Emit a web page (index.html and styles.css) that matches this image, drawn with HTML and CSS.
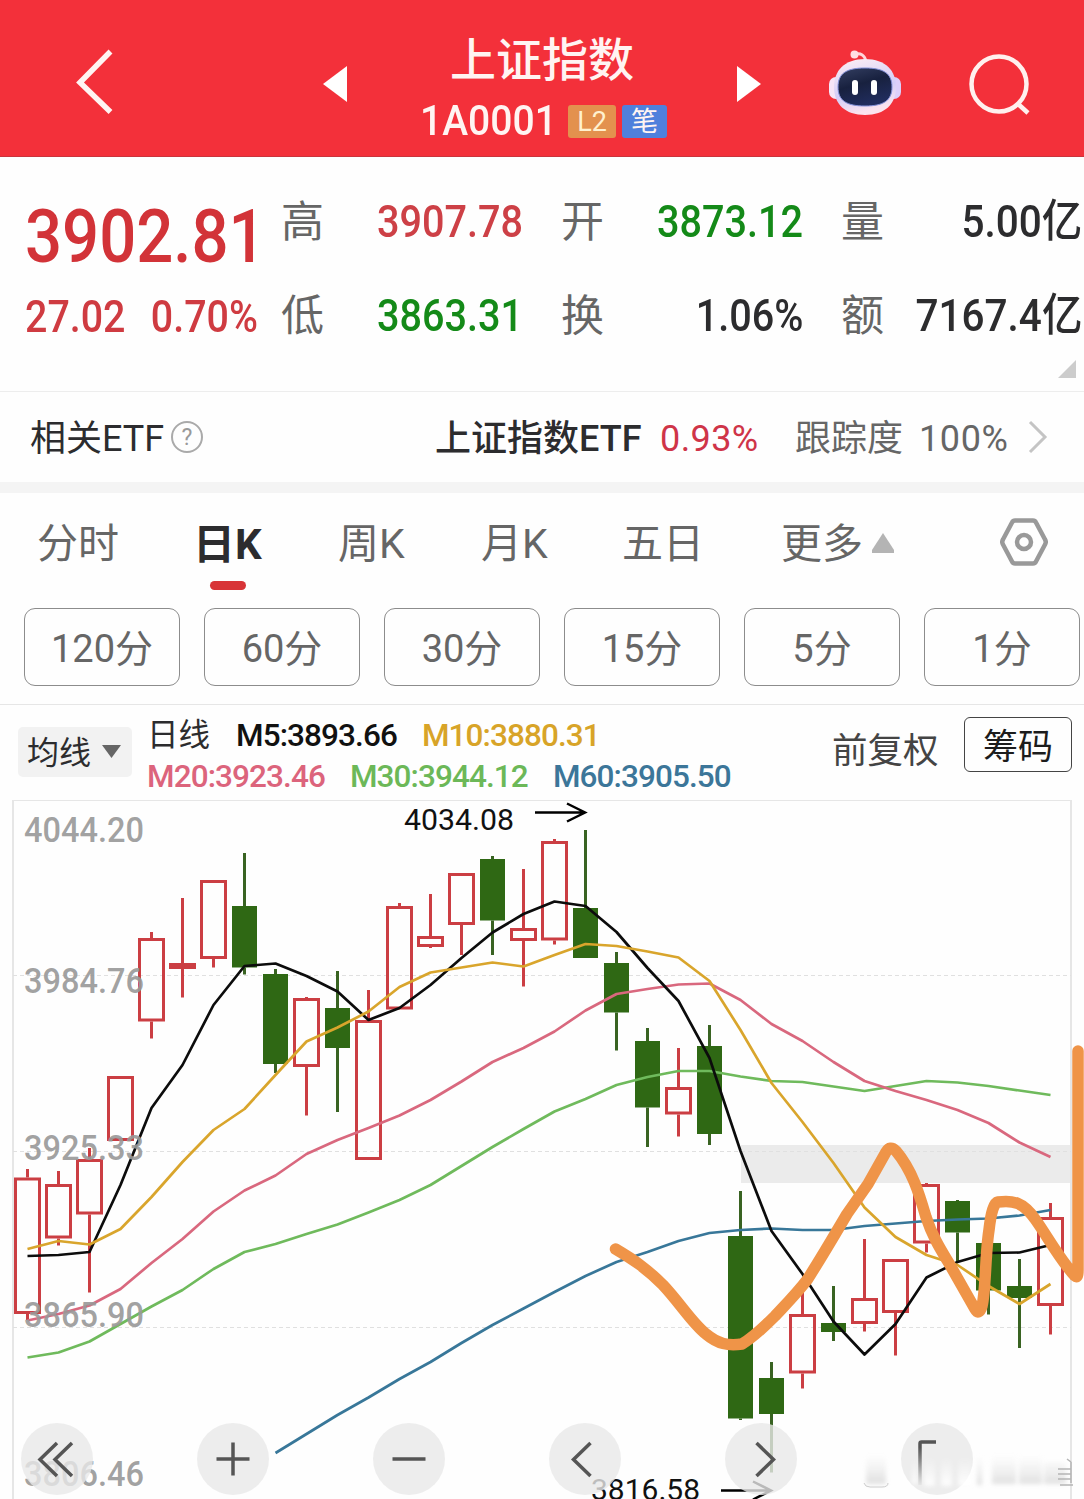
FILE: index.html
```html
<!DOCTYPE html>
<html lang="zh-CN">
  <head>
    <meta charset="UTF-8" />
    <meta name="viewport" content="width=device-width, initial-scale=1.0" />
    <title>上证指数</title>
    <link rel="stylesheet" href="styles.css">
  </head>
  <body>
    <header class="header">
      <svg class="back" width="38" height="66" viewBox="0 0 38 66"><path d="M34.5 2.5L4 33.500L34.500 63" /></svg>
      <svg class="prev" width="24" height="36" viewBox="0 0 24 36"><path d="M0 18L24 0V36z" /></svg>
      <div class="title">
        <h1>上证指数</h1>
        <div class="code">
          <span class="code-num">1A0001</span>
          <span class="badge badge-l2">L2</span>
          <span class="badge badge-pen">笔</span>
        </div>
      </div>
      <svg class="next" width="24" height="36" viewBox="0 0 24 36"><path d="M24 18L0 0V36z" /></svg>
      <svg class="robot" width="74" height="70" viewBox="0 0 74 70">
        <defs>
          <linearGradient id="shell" x1="0" y1="0" x2="0.3" y2="1">
            <stop offset="0" stop-color="#fff0f4" />
            <stop offset="0.65" stop-color="#d3cdf8" />
            <stop offset="1" stop-color="#fbe3ee" />
          </linearGradient>
          <linearGradient id="visor" x1="0" y1="0" x2="0.4" y2="1">
            <stop offset="0" stop-color="#343f62" />
            <stop offset="0.5" stop-color="#18213f" />
            <stop offset="1" stop-color="#202c5c" />
          </linearGradient>
        </defs>
        <path d="M26 7C32 4 37 7 38 14" fill="none" stroke="#ffd5da" stroke-width="3" />
        <circle cx="26.500" cy="6.500" r="4" fill="#ffe0e3" />
        <rect x="1" y="29" width="14" height="22" rx="7" fill="#f6e5f7" />
        <rect x="59" y="29" width="14" height="22" rx="7" fill="#dccffa" />
        <path d="M37 11C58 11 68 23 68 39C68 56 57 67 37 67S6 56 6 39C6 23 16 11 37 11z" fill="url(#shell)" />
        <path d="M37 20C55 20 64 25 64 39C64 53 55 58 37 58S10 53 10 39C10 25 19 20 37 20z" fill="url(#visor)" stroke="#8290d8" stroke-width="1" />
        <rect x="24" y="32" width="6" height="15" rx="3" fill="#fff" />
        <rect x="43" y="32" width="6" height="15" rx="3" fill="#fff" />
      </svg>
      <svg class="search" width="62" height="62" viewBox="0 0 62 62"><circle cx="30" cy="30" r="27.500" /><path d="M48 49L59 59" /></svg>
    </header>

    <section class="quote">
      <div class="price">3902.81</div>
      <div class="pair"><span>高</span><b class="up">3907.78</b></div>
      <div class="pair"><span>开</span><b class="down">3873.12</b></div>
      <div class="pair"><span>量</span><b class="total">5.00亿</b></div>
      <div class="change"><b>27.02</b><b>0.70%</b></div>
      <div class="pair"><span>低</span><b class="down">3863.31</b></div>
      <div class="pair"><span>换</span><b>1.06%</b></div>
      <div class="pair"><span>额</span><b class="total">7167.4亿</b></div>
      <div class="corner"></div>
    </section>

    <section class="etf">
      <span class="etf-label">相关ETF</span>
      <span class="help">?</span>
      <span class="etf-name">上证指数ETF</span>
      <span class="etf-rate">0.93%</span>
      <span class="etf-track">跟踪度</span>
      <span class="etf-full">100%</span>
      <svg width="20" height="34" viewBox="0 0 20 34"><path d="M2 2L17 17L2 32" /></svg>
    </section>

    <nav class="tabs">
      <span>分时</span>
      <span class="active">日K</span>
      <span>周K</span>
      <span>月K</span>
      <span>五日</span>
      <span>更多<svg class="tri-up" width="22" height="20" viewBox="0 0 22 20"><path d="M11 0L22 17V20H0V17z" /></svg></span>
      <svg class="gear" width="48" height="48" viewBox="0 0 48 48"><path d="M15 2.500H33Q35 2.500 36 4.500L45 21.500Q46.500 24 45 26.500L36 43.500Q35 45.500 33 45.500H15Q13 45.500 12 43.500L3 26.500Q1.500 24 3 21.500L12 4.500Q13 2.500 15 2.500z" /><circle cx="24" cy="24" r="7" /></svg>
    </nav>

    <div class="periods">
      <button>120分</button>
      <button>60分</button>
      <button>30分</button>
      <button>15分</button>
      <button>5分</button>
      <button>1分</button>
    </div>

    <section class="averages">
      <button class="avg-button">均线<svg width="19" height="13" viewBox="0 0 19 13"><path d="M0 0H19L9.500 13z" /></svg></button>
      <div class="legend">
        <div class="legend-row">
          <span class="day">日线</span><span class="m5">M5:3893.66</span><span class="m10">M10:3880.31</span>
        </div>
        <div class="legend-row">
          <span class="m20">M20:3923.46</span><span class="m30">M30:3944.12</span><span class="m60">M60:3905.50</span>
        </div>
      </div>
      <span class="adjust">前复权</span>
      <button class="chips">筹码</button>
    </section>

    <section class="chart">
      <svg class="plot" width="1084" height="699" viewBox="0 800 1084 699">
        <rect x="741" y="1145" width="330" height="38" fill="#ebebeb" />
        <path class="frame" d="M13 1499V800H1071V1499" />
        <path class="grid" d="M13 975.500H1071M13 1151.500H1071M13 1327.500H1071" />
        <g id="candles"></g>
        <g id="lines"></g>
        <g class="scale">
          <text x="24" y="842" textLength="120" lengthAdjust="spacingAndGlyphs">4044.20</text>
          <text x="24" y="993" textLength="120" lengthAdjust="spacingAndGlyphs">3984.76</text>
          <text x="24" y="1160" textLength="120" lengthAdjust="spacingAndGlyphs">3925.33</text>
          <text x="24" y="1327" textLength="120" lengthAdjust="spacingAndGlyphs">3865.90</text>
          <text x="24" y="1486" textLength="120" lengthAdjust="spacingAndGlyphs">3806.46</text>
        </g>
        <g class="mark">
          <text x="404" y="830" textLength="110" lengthAdjust="spacingAndGlyphs">4034.08</text>
          <path d="M535 812.500H585M567 803.500L585 812.500L567 821.500" />
          <text x="591" y="1500" textLength="109" lengthAdjust="spacingAndGlyphs">3816.58</text>
          <path d="M721 1490.500H771M753 1481.500L771 1490.500L753 1499.500" />
        </g>
        <path class="trend" d="M615.500 1249C634 1260 646 1268 663 1285C680 1303 692 1323 706 1334C718 1344 728 1346 742 1344C754 1337 766 1325 775 1316C790 1300 797 1293 807 1280C820 1260 834 1236 847 1214L868 1184L886 1152Q890 1145 896 1151C912 1170 919 1193 926 1217C933 1238 941 1250 950 1265L975 1309Q979 1316 982 1306C986 1290 985 1255 989 1230Q992 1203 998 1202C1013 1200 1023 1202 1035 1219C1046 1234 1060 1260 1075 1276Q1078 1279 1078 1270V1051" />
      </svg>

      <div class="tools">
        <button><svg viewBox="0 0 72 72"><path d="M36 20L19 36.500L36 53M51 20L34 36.500L51 53" /></svg></button>
        <button><svg viewBox="0 0 72 72"><path d="M36 19.500V52.500M19.500 36H52.500" /></svg></button>
        <button><svg viewBox="0 0 72 72"><path d="M19.500 36H52.500" /></svg></button>
        <button><svg viewBox="0 0 72 72"><path d="M41.500 20L24.500 36.500L41.500 53" /></svg></button>
        <button><svg viewBox="0 0 72 72"><path d="M31.500 20L48.500 36.500L31.500 53" /></svg></button>
        <button><svg viewBox="0 0 72 72">
          <defs><linearGradient id="fade" gradientUnits="userSpaceOnUse" x1="0" y1="20" x2="0" y2="62"><stop offset="0.1" stop-color="#555" /><stop offset="1" stop-color="#e4e4e4" /></linearGradient></defs>
          <path d="M19 62V20.500Q19 19 20.500 19H35" style="stroke: url(#fade)" />
        </svg></button>
      </div>

      <svg class="smudge" width="224" height="40" viewBox="860 1450 224 40">
        <defs>
          <linearGradient id="streak" x1="0" y1="0" x2="0" y2="1"><stop offset="0" stop-color="#ddd" stop-opacity="0" /><stop offset="1" stop-color="#ccc" stop-opacity="0.6" /></linearGradient>
          <linearGradient id="shine" x1="0" y1="0" x2="0" y2="1"><stop offset="0" stop-color="#fff" stop-opacity="0" /><stop offset="1" stop-color="#fff" stop-opacity="0.9" /></linearGradient>
        </defs>
        <g class="soft">
          <path d="M866 1455H886V1484H866z" fill="url(#streak)" />
          <path d="M977 1457H982V1485H977zM992 1455H1016V1484H992zM1019 1457H1042V1484H1019zM1044 1462H1066V1484H1044z" fill="url(#streak)" />
          <path d="M912 1457H917V1484H912zM924 1457H935V1486H924zM941 1457H952V1486H941zM958 1457H972V1486H958z" fill="url(#shine)" />
        </g>
        <path class="rim" d="M864 1483Q865 1487 870 1487H882Q888 1487 888 1483" />
        <path d="M1058 1469H1071M1058 1474H1071M1058 1479H1071M1071 1462V1483M1060 1485H1073M1067 1459L1071 1462" fill="none" stroke="#b5b5b5" stroke-width="1.5" />
      </svg>
    </section>

    <script>
      const svgNS = "http://www.w3.org/2000/svg";
      const startX = 27.5;
      const step = 31;

      // direction, high, body top, body bottom, low
      const candles = [
        ["up", 1169, 1177.5, 1314, 1320],
        ["up", 1171, 1184, 1238.5, 1245.5],
        ["up", 1148, 1159, 1214.5, 1292.5],
        ["up", 1076, 1076, 1141, 1141],
        ["up", 932, 938, 1021.5, 1038.5],
        ["up", 898, 963, 969, 997.5],
        ["up", 880, 880, 959, 967.5],
        ["down", 853, 906, 967.5, 974.5],
        ["down", 969, 974, 1064, 1073],
        ["up", 997, 998, 1067, 1115.5],
        ["down", 971, 1008, 1048, 1112],
        ["up", 990, 1020, 1160, 1160],
        ["up", 903, 906, 1009.5, 1009.5],
        ["up", 894, 936, 947, 948],
        ["up", 873, 873, 925, 955],
        ["down", 856, 859, 920.5, 955],
        ["up", 869, 928, 941, 986.5],
        ["up", 839, 841, 940.5, 944.5],
        ["down", 830, 908, 958, 958],
        ["down", 952, 963, 1012.5, 1050.5],
        ["down", 1028, 1041, 1107.5, 1147],
        ["up", 1048, 1087, 1114.5, 1136.5],
        ["down", 1025, 1046, 1134, 1145],
        ["down", 1191, 1236, 1418.5, 1420],
        ["down", 1362, 1378, 1414, 1472.5],
        ["up", 1290, 1314, 1373.5, 1388.5],
        ["down", 1286, 1323, 1332, 1341],
        ["up", 1239, 1298, 1324, 1331.5],
        ["up", 1259, 1259, 1313, 1355.5],
        ["up", 1183, 1184, 1243.5, 1252.5],
        ["down", 1200, 1201, 1232.5, 1262],
        ["down", 1243, 1243, 1290.5, 1314.5],
        ["down", 1259, 1286, 1298, 1348],
        ["up", 1203, 1217, 1306, 1334.5]
      ];

      const averages = [
        { name: "m60", from: 8, values: [1453, 1434, 1415, 1397.5, 1379, 1362, 1343, 1325, 1308.5, 1292, 1276, 1262, 1252, 1241, 1233, 1230, 1228.5, 1230, 1230, 1226, 1223.5, 1221, 1219.5, 1218.5, 1215.5, 1210] },
        { name: "m30", from: 0, values: [1357.5, 1352.5, 1341.5, 1324, 1306.5, 1290, 1269, 1252, 1244, 1234, 1224.5, 1212.5, 1200, 1185, 1166, 1147, 1129, 1111.5, 1099, 1085, 1077, 1071, 1071, 1076.5, 1081, 1082, 1086.5, 1091, 1086, 1081, 1082.5, 1086, 1090.5, 1095] },
        { name: "m20", from: 0, values: [1320.5, 1314, 1305.5, 1289, 1263, 1239, 1211.5, 1190.5, 1175.5, 1154, 1140, 1128, 1115.5, 1100, 1081.5, 1062, 1048, 1031.5, 1010.5, 994, 989, 984.5, 983.5, 1000, 1024, 1041, 1062, 1081, 1091, 1100, 1110, 1123, 1142.5, 1157] },
        { name: "m5", from: 0, values: [1256, 1255, 1252, 1185, 1108, 1065, 1005, 966, 963.5, 976, 991.5, 1020, 1008, 985, 958, 932.5, 914, 901.5, 906, 932, 968, 1001, 1058, 1151, 1231, 1274, 1321.5, 1354.5, 1324, 1277.5, 1262, 1253, 1252.5, 1245] },
        { name: "m10", from: 0, values: [1249, 1241, 1244.5, 1229, 1197, 1162, 1130, 1109, 1075, 1041.5, 1027.5, 1011.5, 987, 972.5, 967.5, 962.5, 966.5, 955, 944, 946, 951.5, 957.5, 981, 1030, 1083, 1122, 1163, 1207.5, 1237, 1255, 1265, 1286, 1304, 1284] }
      ];

      function draw(parent, tag, attrs) {
        const el = document.createElementNS(svgNS, tag);
        for (const key in attrs) el.setAttribute(key, attrs[key]);
        parent.appendChild(el);
      }

      const candleGroup = document.querySelector("#candles");
      candles.forEach(([dir, high, top, bottom, low], i) => {
        const x = startX + step * i;
        draw(candleGroup, "path", { class: "wick " + dir, d: `M${x} ${high}V${top}M${x} ${bottom}V${low}` });
        if (dir === "up") {
          draw(candleGroup, "rect", { class: "body up", x: x - 12, y: top + 1.5, width: 24, height: bottom - top - 3 });
        } else {
          draw(candleGroup, "rect", { class: "body down", x: x - 12.5, y: top, width: 25, height: bottom - top });
        }
      });

      const lineGroup = document.querySelector("#lines");
      averages.forEach((avg) => {
        const points = avg.values.map((y, i) => `${startX + step * (avg.from + i)},${y}`).join(" ");
        draw(lineGroup, "polyline", { class: "line-" + avg.name, points: points });
      });
    </script>
  </body>
</html>
```
FILE: styles.css
```css
* {
  box-sizing: border-box;
  margin: 0;
  padding: 0;
}

body {
  width: 1084px;
  height: 1499px;
  overflow: hidden;
  background: #fefefe;
  color: #2c2c2e;
  font-family: Roboto, "Noto Sans CJK SC", sans-serif;
  line-height: 1.2;
  white-space: nowrap;
}

button {
  font-family: inherit;
  line-height: 1.2;
  background: none;
  border: none;
}

svg {
  display: block;
  flex: none;
}

.header {
  display: flex;
  align-items: center;
  height: 157px;
  padding: 12px 0 0 76px;
  background: #f3303a;
  border-bottom: 1px solid #c9343c;
}

.back {
  fill: none;
  stroke: #fff4f2;
  stroke-width: 5.5;
  margin: -5px 209px 0 0;
}

.prev,
.next {
  fill: #fff;
}

.title {
  width: 390px;
  margin-top: 13px;
  color: #fff4f2;
  text-align: center;
}

.title h1 {
  font-size: 46px;
  font-weight: 500;
  line-height: 62px;
}

.code {
  display: flex;
  align-items: center;
  height: 62px;
  padding-left: 73px;
}

.code-num {
  width: 147px;
  text-align: left;
  font-size: 42px;
  font-weight: 500;
  transform: scaleX(0.93);
  transform-origin: left;
}

.badge {
  height: 33px;
  border-radius: 3px;
  font-size: 27px;
  line-height: 34px;
}

.badge-l2 {
  width: 48px;
  margin-left: 1px;
  background: #e3914e;
  color: #fff0cf;
}

.badge-pen {
  width: 45px;
  margin-left: 6px;
  background: #4f80dc;
}

.robot {
  margin: -3px 67px 0;
}

.search {
  fill: none;
  stroke: #fff0ee;
  stroke-width: 4.5;
  margin-top: 2px;
}

.quote {
  position: relative;
  display: grid;
  grid-template-columns: 218px 242px 242px 241px;
  grid-template-rows: 94px 94px;
  column-gap: 38px;
  align-items: center;
  height: 235px;
  padding: 17px 0 0 25px;
  border-bottom: 1px solid #ededed;
}

.price {
  padding-top: 30px;
  color: #d23338;
  font-size: 75px;
  font-weight: 500;
  line-height: 80px;
  transform: scaleX(0.87);
  transform-origin: left;
}

.change {
  display: flex;
  gap: 29px;
  padding-top: 3px;
  color: #cf3b41;
  font-size: 45px;
  transform: scaleX(0.875);
  transform-origin: left;
}

.change b {
  font-weight: 500;
}

.pair {
  display: flex;
  justify-content: space-between;
  align-items: center;
  padding-top: 2px;
}

.pair span {
  padding-top: 2px;
  color: #666;
  font-size: 43px;
}

.pair b {
  font-size: 45px;
  font-weight: 500;
  transform: scaleX(0.88);
  transform-origin: right;
}

.pair .total {
  transform: scaleX(0.9);
}

.up {
  color: #cd4046;
}

.down {
  color: #148a18;
}

.corner {
  position: absolute;
  right: 8px;
  bottom: 13px;
  border-left: 18px solid transparent;
  border-bottom: 18px solid #ccc;
}

.etf {
  display: flex;
  align-items: center;
  height: 101px;
  padding: 0 0 0 30px;
  border-bottom: 11px solid #f4f4f4;
  font-size: 36px;
}

.etf > span {
  flex: none;
  padding-top: 5px;
}

.etf-label {
  width: 141px;
}

.etf .help {
  width: 32px;
  height: 32px;
  padding: 0;
  border: 2px solid #aaa;
  border-radius: 50%;
  color: #999;
  font-size: 23px;
  line-height: 29px;
  text-align: center;
}

.etf-name {
  width: 225px;
  margin-left: 232px;
  font-weight: 500;
}

.etf-rate {
  width: 135px;
  color: #cf3448;
  letter-spacing: 0.4px;
}

.etf-track {
  width: 124px;
  color: #666;
}

.etf-full {
  width: 109px;
  color: #666;
  letter-spacing: 0.6px;
}

.etf svg {
  fill: none;
  stroke: #c4c4c4;
  stroke-width: 3;
}

.tabs {
  display: grid;
  grid-template-columns: 158px 143px 143px 141px 159px 219px 48px;
  align-items: center;
  height: 100px;
  padding-left: 37px;
  color: #666;
  font-size: 41px;
}

.tabs span {
  display: flex;
  align-items: center;
  padding-top: 4px;
}

.tabs .active {
  position: relative;
  left: -2px;
  color: #2c2c2e;
  font-size: 42px;
  font-weight: 700;
}

.tabs .active::after {
  content: "";
  position: absolute;
  left: 17px;
  bottom: -20px;
  width: 36px;
  height: 9px;
  border-radius: 5px;
  background: #d83437;
}

.tri-up {
  margin: -5px 0 0 9px;
  fill: #b4b4b4;
}

.gear {
  margin-top: -2px;
  fill: none;
  stroke: #999;
  stroke-width: 4.5;
}

.periods {
  display: flex;
  gap: 24px;
  height: 112px;
  padding: 15px 0 0 24px;
  border-bottom: 1px solid #e6e6e6;
}

.periods button {
  flex: none;
  width: 156px;
  height: 78px;
  padding-top: 5px;
  border: 1px solid #8c8c8c;
  border-radius: 11px;
  color: #666;
  font-size: 38px;
}

.averages {
  display: flex;
  height: 95px;
  padding-left: 18px;
}

.avg-button {
  display: flex;
  align-items: center;
  width: 114px;
  height: 50px;
  margin-top: 22px;
  padding: 3px 0 0 9px;
  border-radius: 5px;
  background: #f2f2f2;
  color: #2c2c2e;
  font-size: 32px;
}

.avg-button svg {
  margin: -4px 0 0 11px;
  fill: #666;
}

.legend {
  width: 685px;
  padding: 10px 0 0 15px;
  font-size: 31.5px;
  font-weight: 500;
  letter-spacing: -0.9px;
}

.legend-row {
  display: flex;
  gap: 25px;
  height: 41px;
  line-height: 41px;
}

.legend .day {
  width: 64px;
  font-weight: 400;
  letter-spacing: 0;
}

.m5 { color: #111; }
.m10 { color: #d8a428; }
.m20 { color: #dc647c; }
.m30 { color: #6cb858; }
.m60 { color: #3c7699; }

.adjust {
  width: 132px;
  margin-left: 15px;
  color: #444;
  font-size: 35.5px;
  line-height: 92px;
}

.averages .chips {
  width: 108px;
  height: 55px;
  margin-top: 12px;
  padding-top: 6px;
  border: 1px solid #444;
  border-radius: 6px;
  color: #1c1c1c;
  font-size: 35px;
}

.chart {
  position: relative;
  height: 699px;
}

.frame {
  fill: none;
  stroke: #e6e6e6;
  stroke-width: 2;
}

.grid {
  stroke: #e0e0e0;
  stroke-dasharray: 4 3;
}

.wick,
.body {
  fill: none;
  stroke-width: 3;
}

.wick.up,
.body.up {
  stroke: #cb3e43;
}

.wick.down {
  stroke: #396322;
}

.body.down {
  fill: #2f6814;
}

#lines polyline {
  fill: none;
  stroke-width: 2.7;
  stroke-linejoin: round;
}

#lines .line-m5 { stroke: #0c0c0c; }
#lines .line-m10 { stroke: #d9a52c; }
#lines .line-m20 { stroke: #d9687e; }
#lines .line-m30 { stroke: #6fba5c; }
#lines .line-m60 { stroke: #387799; }

.scale text {
  fill: #999;
  fill-opacity: 0.92;
  font-size: 35.5px;
  font-weight: 500;
}

.mark text {
  fill: #111;
  font-size: 30px;
}

.mark path {
  fill: none;
  stroke: #000;
  stroke-width: 2.5;
}

.trend {
  fill: none;
  stroke: #ef9448;
  stroke-width: 11.5;
  stroke-linecap: round;
  stroke-linejoin: round;
}

.tools {
  position: absolute;
  left: 21px;
  bottom: 4px;
  display: flex;
  gap: 104px;
}

.tools button {
  width: 72px;
  height: 72px;
  border-radius: 50%;
  background: rgba(233, 233, 233, 0.8);
}

.tools path {
  fill: none;
  stroke: #555;
  stroke-width: 3.5;
}

.smudge {
  position: absolute;
  right: 0;
  bottom: 9px;
}

.soft {
  filter: blur(2px);
}

.rim {
  fill: none;
  stroke: #ccc;
}
```
